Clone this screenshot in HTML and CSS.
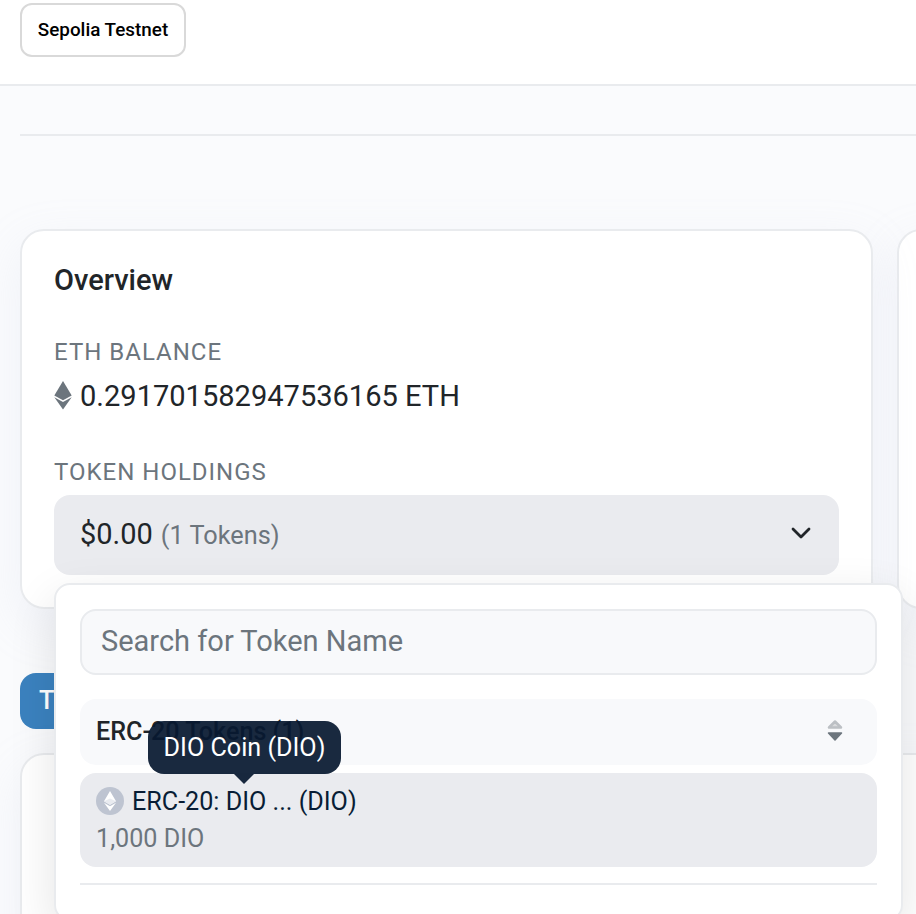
FILE: index.html
```html
<!DOCTYPE html>
<html lang="en">
<head>
<meta charset="utf-8">
<title>Sepolia Testnet</title>
<link rel="stylesheet" href="styles.css">
</head>
<body>
<header class="topbar"><div class="network">Sepolia Testnet</div></header>
<main class="content">
  <hr class="divider">
  <div class="cards">
    <section class="card overview">
      <h1 class="title">Overview</h1>
      <h2 class="label">ETH BALANCE</h2>
      <div class="balance">
        <svg class="eth" viewBox="0 0 18 30"><path d="M9 1 17.700 15.500 9 20.200 .3 15.500z"/><path d="M.3 17.300 9 22l8.700-4.700L9 29.500z"/></svg>
        <span>0.291701582947536165 ETH</span>
      </div>
      <h2 class="label holdings-label">TOKEN HOLDINGS</h2>
      <div class="holdings">
        <div class="select">
          <span class="amount">$0.00</span><span class="count">(1 Tokens)</span>
          <svg class="chevron" viewBox="0 0 20 12"><path d="M2 2l8 8 8-8"/></svg>
        </div>
        <div class="dropdown">
          <input class="search" type="text" placeholder="Search for Token Name" aria-label="Search for Token Name">
          <div class="group">
            <span>ERC-20 Tokens (1)</span>
            <svg class="sort" viewBox="0 0 16 24"><path class="up" d="M2 8.500h12L8 2.500z"/><path class="down" d="M1.500 14h13L8 21z"/></svg>
          </div>
          <div class="token">
            <div class="token-name">
              <svg class="token-icon" viewBox="0 0 28 28"><circle cx="14" cy="14" r="14"/><path class="face" d="M14 4l6 10.300-6 3.500-6-3.500zM8 15.800l6 3.500 6-3.500L14 24z"/><path class="shade" d="M8 14.300l6-2.700 6 2.700-6 3.500z"/></svg>
              <span>ERC-20: DIO ... (DIO)</span>
              <div class="tooltip">DIO Coin (DIO)</div>
            </div>
            <div class="token-amount">1,000 DIO</div>
          </div>
          <hr class="rule">
        </div>
      </div>
    </section>
    <section class="card"></section>
  </div>
  <div class="tab">T</div>
  <section class="card transactions"></section>
</main>
</body>
</html>
```
FILE: styles.css
```css
* { box-sizing: border-box; }
html, body { height: 100%; overflow: hidden; }
body {
  margin: 0;
  background: #fafbfd;
  color: #212529;
  font: 29px/44px Roboto, sans-serif;
}
h1, h2, hr { margin: 0; font-weight: 400; }
hr { border: 0; height: 2px; background: #e9ebee; }
svg { display: block; flex: none; }

.topbar {
  height: 86px;
  padding: 3px 20px;
  background: #fff;
  border-bottom: 2px solid #e9ebee;
}
.network {
  width: 166px;
  height: 54px;
  border: 2px solid #d9d9d9;
  border-radius: 12px;
  color: #000;
  font-size: 18.850px;
  font-weight: 500;
  line-height: 50px;
  text-align: center;
  white-space: nowrap;
}

.content { height: 828px; overflow: hidden; padding: 48px 0 0 20px; }
.cards {
  display: grid;
  grid-template-columns: 853px 853px;
  gap: 24px;
  height: 380px;
  margin-top: 93px;
}
.card {
  background: #fff;
  border: 2px solid #e9ebee;
  border-radius: 24px;
  box-shadow: 0 16px 48px rgba(189, 197, 219, .17);
}
.overview { position: relative; z-index: 1; padding: 26px 32px; }
.title { font-size: 29px; font-weight: 500; line-height: 46px; }
.label {
  margin-top: 31px;
  color: #6c757d;
  font-size: 24px;
  line-height: 36px;
  letter-spacing: 1px;
}
.balance { display: flex; align-items: center; gap: 8px; margin-top: 5px; height: 42px; font-size: 29.050px; }
.eth { width: 18px; height: 30px; margin-bottom: 3px; fill: #6c757d; }
.holdings-label { margin-top: 37px; }

.holdings { position: relative; margin-top: 5px; }
.select {
  display: flex;
  align-items: center;
  width: 785px;
  height: 80px;
  padding: 0 28px 2px 26px;
  border-radius: 16px;
  background: #eaebef;
}
.count { margin-left: 8px; color: #6c757d; font-size: 25.300px; padding-top: 4px; }
.chevron { width: 20px; height: 12px; margin: 0 0 2px auto; }
.chevron path { fill: none; stroke: #212529; stroke-width: 2.800; stroke-linecap: round; stroke-linejoin: round; }

.dropdown {
  position: absolute;
  top: 88px;
  left: 0;
  width: 849px;
  height: 338px;
  padding: 24px;
  background: #fff;
  border: 2px solid #e9ebee;
  border-radius: 16px;
  box-shadow: 0 16px 48px rgba(0, 0, 0, .11);
}
.search {
  display: block;
  width: 797px;
  height: 66px;
  padding: 0 19px 2px;
  border: 2px solid #e9ebee;
  border-radius: 16px;
  background: #f8f9fb;
  font: 29px Roboto, sans-serif;
  outline: 0;
}
.search::placeholder { color: #6c757d; opacity: 1; }
.group {
  display: flex;
  align-items: center;
  justify-content: space-between;
  width: 797px;
  height: 66px;
  margin-top: 24px;
  padding: 0 34px 0 16px;
  border-radius: 16px;
  background: #f8f9fb;
  font-size: 25.150px;
  font-weight: 500;
}
.sort { width: 16px; height: 24px; margin-bottom: 2px; }
.up { fill: #d9dbdd; stroke: #bcc0c4; stroke-width: 2.500; stroke-linejoin: round; }
.down { fill: #6c757d; stroke: #6c757d; stroke-width: 1.500; stroke-linejoin: round; }
.token {
  width: 797px;
  height: 94px;
  margin-top: 8px;
  padding: 10px 16px 8px;
  border-radius: 16px;
  background: #eaebef;
  font-size: 25.150px;
  line-height: 38px;
}
.token-name { position: relative; display: flex; align-items: center; gap: 8px; width: max-content; color: #081d35; }
.token-icon { width: 28px; height: 28px; margin-bottom: 2px; fill: #bec4d1; }
.face { fill: #fff; }
.shade { fill: #e9ebf0; }
.token-amount { color: #6c757d; line-height: 36px; }
.tooltip {
  position: absolute;
  left: 52px;
  top: -62px;
  width: 193px;
  height: 53px;
  border-radius: 16px;
  background: rgba(8, 25, 48, .93);
  color: #fff;
  line-height: 54px;
  text-align: center;
  white-space: nowrap;
}
.tooltip::after {
  content: "";
  position: absolute;
  top: 53px;
  left: 86px;
  border: solid transparent;
  border-width: 10px 10px 0;
  border-top-color: rgba(8, 25, 48, .93);
}
.rule { width: 797px; margin-top: 16px; }

.tab {
  width: 120px;
  height: 56px;
  margin-top: 64px;
  padding-left: 19px;
  border-radius: 16px;
  background: #3b82bf;
  color: #fff;
  font-size: 25.400px;
  font-weight: 500;
  line-height: 54px;
}
.transactions { width: 1731px; height: 300px; margin-top: 24px; }
```
